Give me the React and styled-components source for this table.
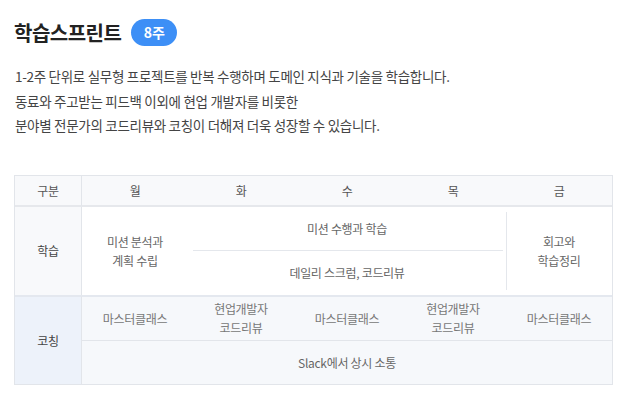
import React from "react";
import styled, { createGlobalStyle } from "styled-components";

const GlobalStyle = createGlobalStyle`
  html, body {
    margin: 0;
    padding: 0;
    background: #fff;
  }
  body {
    font-family: "Noto Sans CJK KR", "Noto Sans", sans-serif;
    color: #222;
  }
`;

const Page = styled.div`
  width: 623px;
  padding: 18px 10px 0 14px;
  box-sizing: border-box;
`;

const TitleRow = styled.div`
  display: flex;
  align-items: center;
  gap: 10px;
  height: 28px;
`;

const Title = styled.h2`
  margin: 0;
  font-size: 20px;
  font-weight: 700;
  color: #222;
  letter-spacing: -0.5px;
`;

const Badge = styled.span`
  display: inline-flex;
  align-items: center;
  justify-content: center;
  width: 46px;
  height: 27px;
  border-radius: 14px;
  background: #3d8ff6;
  color: #fff;
  font-size: 14px;
  font-weight: 700;
`;

const Desc = styled.p`
  margin: 18px 0 0 1px;
  font-size: 13.5px;
  line-height: 24.5px;
  color: #444;
  letter-spacing: -0.3px;
`;

const Table = styled.div`
  margin-top: 37px;
  width: max-content;
  display: grid;
  grid-template-columns: 67px repeat(5, 106px);
  grid-template-rows: 31px 44px 44px 45px 44px;
  border: 1px solid #e2e5ea;
  font-size: 12px;
  letter-spacing: -0.3px;
`;

const Cell = styled.div`
  position: relative;
  display: flex;
  align-items: center;
  justify-content: center;
  text-align: center;
  line-height: 19px;
  color: ${(p) => p.$color || "#666"};
  background: ${(p) => p.$bg || "#fff"};
  grid-column: ${(p) => p.$col || "auto"};
  grid-row: ${(p) => p.$row || "auto"};
  border-top: ${(p) => p.$lineTop || "none"};
  box-sizing: border-box;

  /* inset vertical divider */
  &::after {
    content: "";
    display: ${(p) => (p.$div ? "block" : "none")};
    position: absolute;
    ${(p) => (p.$div === "left" ? "left: 0;" : "right: -1px;")}
    top: 5px;
    bottom: 5px;
    width: 1px;
    background: #e4e7ec;
  }

  /* inset horizontal divider */
  &::before {
    content: "";
    display: ${(p) => (p.$divBottom ? "block" : "none")};
    position: absolute;
    left: 5px;
    right: 3px;
    bottom: 0;
    height: 1px;
    background: #e4e7ec;
  }
`;

const Label = styled(Cell)`
  color: #444;
  border-right: 1px solid #e2e5ea;
`;

const Head = styled(Cell)`
  background: #f8f9fb;
  color: #555;
  border-bottom: 2px solid #e6e8ec;
`;

const HeadLabel = styled(Head)`
  border-right: 1px solid #e2e5ea;
`;

const days = ["월", "화", "수", "목", "금"];
const coaching = [
  "마스터클래스",
  ["현업개발자", "코드리뷰"],
  "마스터클래스",
  ["현업개발자", "코드리뷰"],
  "마스터클래스",
];

const Lines = ({ text }) =>
  Array.isArray(text) ? (
    <span>
      {text[0]}
      <br />
      {text[1]}
    </span>
  ) : (
    <span>{text}</span>
  );

export default function App() {
  return (
    <Page>
      <GlobalStyle />
      <TitleRow>
        <Title>학습스프린트</Title>
        <Badge>8주</Badge>
      </TitleRow>
      <Desc>
        1-2주 단위로 실무형 프로젝트를 반복 수행하며 도메인 지식과 기술을 학습합니다.
        <br />
        동료와 주고받는 피드백 이외에 현업 개발자를 비롯한
        <br />
        분야별 전문가의 코드리뷰와 코칭이 더해져 더욱 성장할 수 있습니다.
      </Desc>

      <Table>
        <HeadLabel>구분</HeadLabel>
        {days.map((d) => (
          <Head key={d}>{d}</Head>
        ))}

        <Label $col="1" $row="2 / 4" $bg="#f8f9fb">
          학습
        </Label>
        <Cell $col="2" $row="2 / 4" $div="right">
          <Lines text={["미션 분석과", "계획 수립"]} />
        </Cell>
        <Cell $col="3 / 6" $row="2" $divBottom>
          미션 수행과 학습
        </Cell>
        <Cell $col="3 / 6" $row="3">
          데일리 스크럼, 코드리뷰
        </Cell>
        <Cell $col="6" $row="2 / 4" $div="left">
          <Lines text={["회고와", "학습정리"]} />
        </Cell>

        <Label $col="1" $row="4 / 6" $bg="#edf2fa" $lineTop="2px solid #e4e8ef">
          코칭
        </Label>
        {coaching.map((c, i) => (
          <Cell
            key={i}
            $row="4"
            $bg="#f6f8fb"
            $color="#777"
            $lineTop="2px solid #e4e8ef"
            $div={i < 4 ? "right" : undefined}
          >
            <Lines text={c} />
          </Cell>
        ))}
        <Cell $col="2 / 7" $row="5" $bg="#f6f8fb" $lineTop="1px solid #e2e5ea">
          Slack에서 상시 소통
        </Cell>
      </Table>
    </Page>
  );
}
